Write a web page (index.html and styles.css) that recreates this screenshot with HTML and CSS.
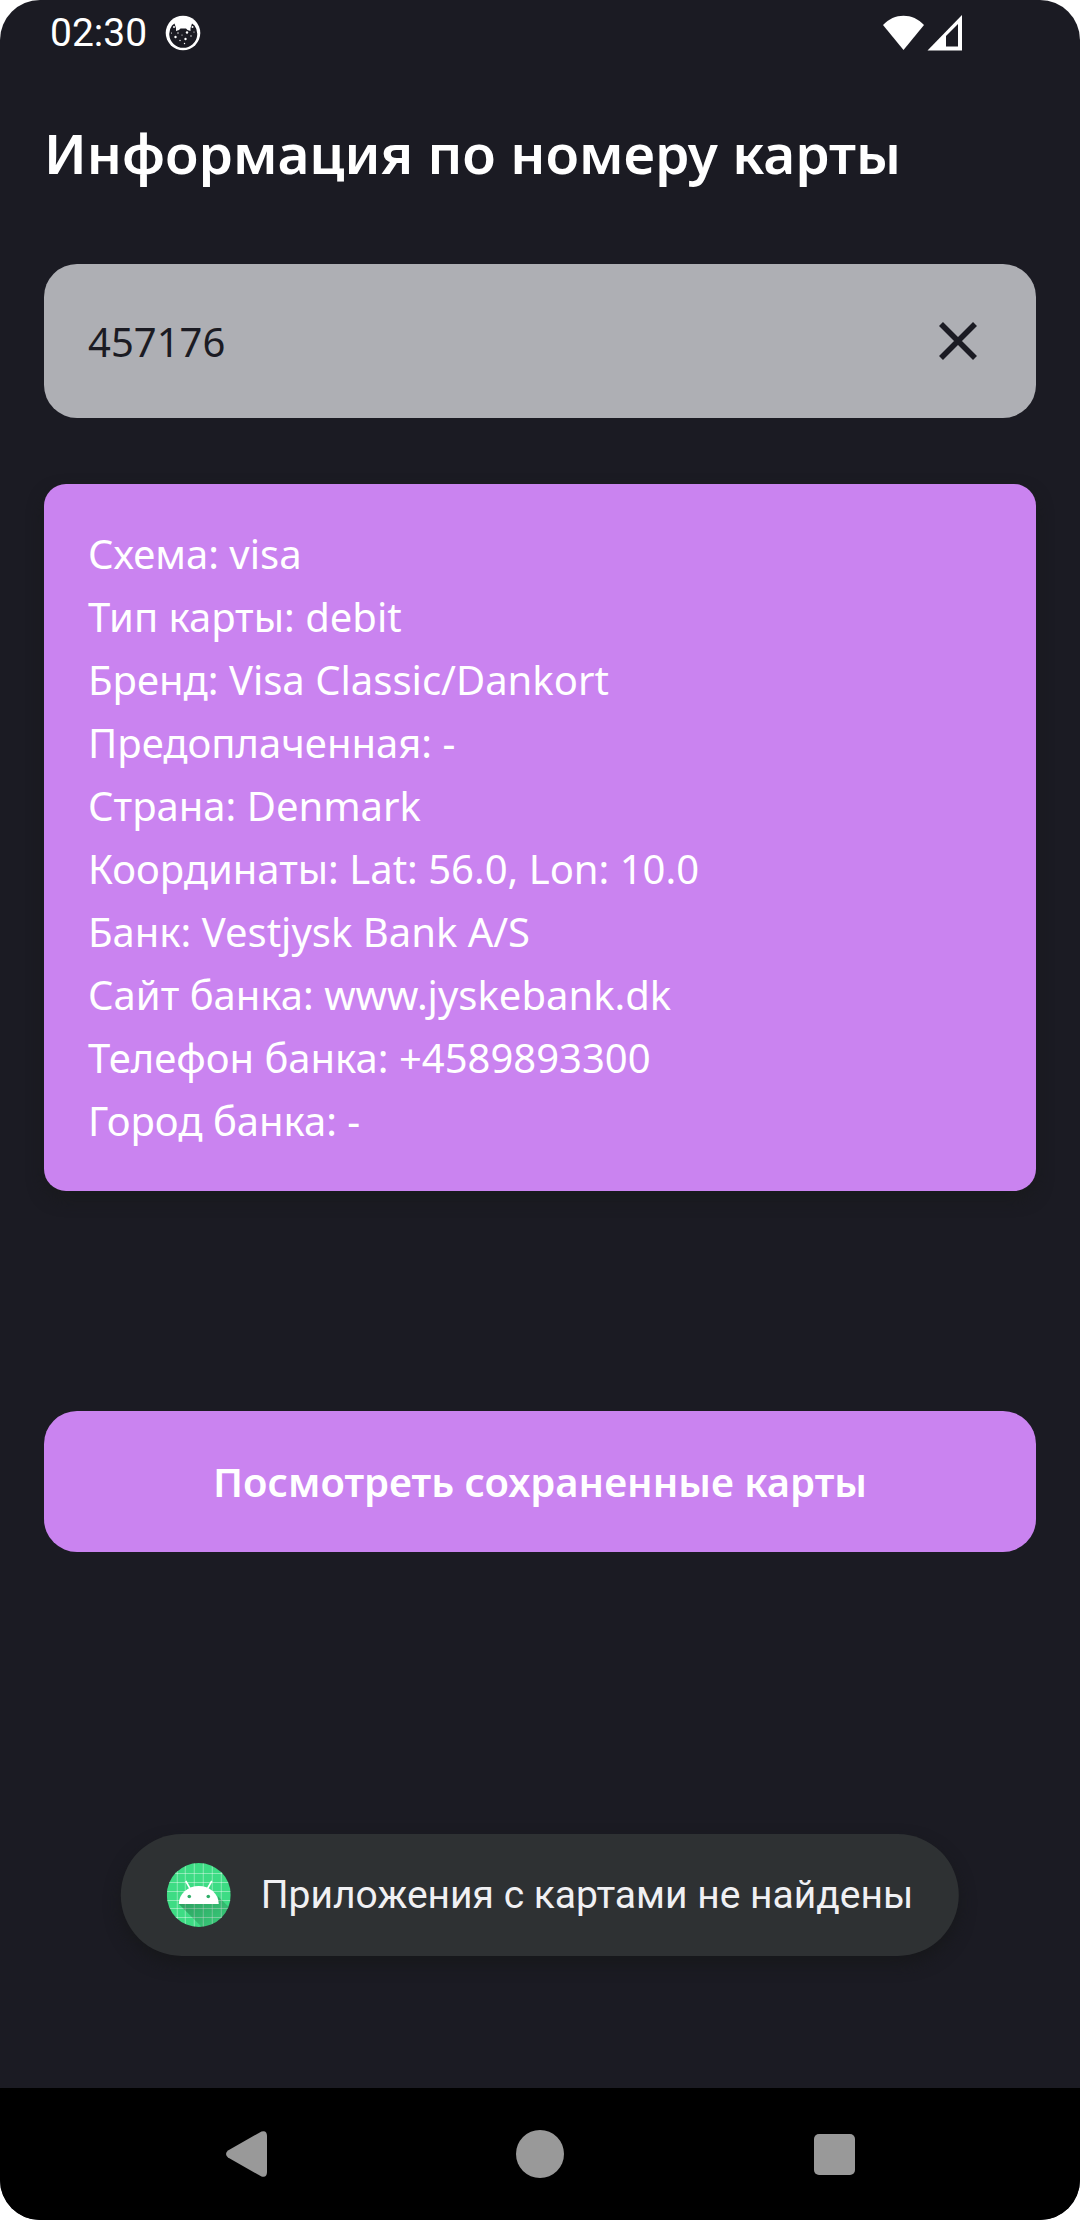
FILE: index.html
```html
<!DOCTYPE html>
<html lang="ru">
<head>
  <meta charset="utf-8">
  <meta name="viewport" content="width=device-width, initial-scale=1">
  <title>Информация по номеру карты</title>
  <link rel="stylesheet" href="styles.css">
</head>
<body>
  <div class="screen">
    <header class="status">
      <time class="status-time">02:30</time>
      <svg class="status-app" viewBox="0 0 36 36" aria-hidden="true">
        <circle cx="18" cy="18" r="17.3" fill="#fff"/>
        <path d="M7 10.500 9.500 8.500 11 13 11 16 14 15 15.500 13.500H21L22.500 15 25.500 16V13L27 8.500 29.500 10.500A14 14 0 1 1 7 10.500Z" fill="#1b1b23"/>
        <g fill="#fff">
          <circle cx="9" cy="12" r="1"/><circle cx="27.500" cy="12" r="1"/>
          <circle cx="22" cy="17.500" r="1.200"/><circle cx="10.500" cy="22" r="1.200"/><circle cx="20.500" cy="24" r="1.200"/>
          <circle cx="13" cy="18" r=".7"/><circle cx="17" cy="20" r=".6"/><circle cx="26" cy="21" r=".7"/>
          <circle cx="15" cy="25.500" r=".7"/><circle cx="19.500" cy="28.500" r=".7"/><circle cx="6.500" cy="18" r=".6"/><circle cx="29" cy="17" r=".6"/>
        </g>
      </svg>
      <svg class="status-signal" viewBox="0 0 80 36" aria-label="Wi-Fi и сотовая сеть" role="img">
        <path d="M0 10C11-2.500 30-2.500 41 10L20.500 35Z" fill="#fff"/>
        <path d="M44.500 35.500 79 0V35.500Z" fill="#fff"/>
        <path d="M63 21 75 9V31.500H63Z" fill="#1b1b23"/>
      </svg>
    </header>

    <main class="content">
      <h1 class="title">Информация по номеру карты</h1>

      <form class="search">
        <input class="search-input" type="text" inputmode="numeric" aria-label="Номер карты" value="457176">
        <button class="search-clear" type="reset" aria-label="Очистить">
          <svg viewBox="0 0 40 40" aria-hidden="true"><path d="M3 3 37 37M37 3 3 37" stroke="#1b1b23" stroke-width="5.600" fill="none"/></svg>
        </button>
      </form>

      <section class="card">
        <p>Схема: visa</p>
        <p>Тип карты: debit</p>
        <p>Бренд: Visa Classic/Dankort</p>
        <p>Предоплаченная: -</p>
        <p>Страна: Denmark</p>
        <p>Координаты: Lat: 56.0, Lon: 10.0</p>
        <p>Банк: Vestjysk Bank A/S</p>
        <p>Сайт банка: www.jyskebank.dk</p>
        <p>Телефон банка: +4589893300</p>
        <p>Город банка: -</p>
      </section>

      <button class="saved" type="button">Посмотреть сохраненные карты</button>
    </main>

    <div class="toast" role="status">
      <svg class="toast-icon" viewBox="0 0 64 64" aria-hidden="true">
        <defs>
          <clipPath id="disc"><circle cx="32" cy="32" r="32"/></clipPath>
          <linearGradient id="shade" x1="0" y1="0" x2="1" y2="1">
            <stop offset="0" stop-color="#000" stop-opacity=".3"/>
            <stop offset="1" stop-color="#000" stop-opacity=".05"/>
          </linearGradient>
        </defs>
        <g clip-path="url(#disc)">
          <path d="M0 0H64V64H0Z" fill="#3ddc84"/>
          <path d="M10.500 0V64M18.500 0V64M27.500 0V64M36.500 0V64M45.500 0V64M54.500 0V64M0 10.500H64M0 19.500H64M0 28.500H64M0 37.500H64M0 45.500H64M0 54.500H64" stroke="#fff" stroke-opacity=".4"/>
          <path d="M12 41 36 65H64V46L51 33V41Z" fill="url(#shade)"/>
        </g>
        <path d="M12 41A20 18 0 0 1 52 41Z" fill="#fff"/>
        <path d="M19 18 23.500 26M45 18 40.500 26" stroke="#fff" stroke-width="1.600"/>
        <circle cx="22.500" cy="33.500" r="1.800" fill="#2fae68"/><circle cx="41.500" cy="33.500" r="1.800" fill="#2fae68"/>
      </svg>
      <span>Приложения с картами не найдены</span>
    </div>

    <nav class="navbar" aria-label="Системная навигация">
      <button type="button" aria-label="Назад"><svg viewBox="0 0 48 48"><path d="M6 20.500 39.500 1.500Q45 0 45 6V42Q45 48 39.500 46.500L6 27.500Q2 24 6 20.500Z" fill="#999"/></svg></button>
      <button type="button" aria-label="Домой"><svg viewBox="0 0 48 48"><circle cx="24" cy="24" r="24" fill="#999"/></svg></button>
      <button type="button" aria-label="Недавние"><svg viewBox="0 0 48 48"><rect x="4" y="4" width="41" height="41" rx="5" fill="#999"/></svg></button>
    </nav>
  </div>
</body>
</html>
```
FILE: styles.css
```css
* {
  box-sizing: border-box;
}

body {
  margin: 0;
  background: #fff;
  color: #fff;
  font-family: "Noto Sans", "Open Sans", sans-serif;
  font-size: 40px;
  line-height: 63px;
}

button,
input {
  border: 0;
  padding: 0;
  background: none;
  color: inherit;
  font: inherit;
}

svg {
  display: block;
}

.screen {
  position: relative;
  display: flex;
  flex-direction: column;
  min-height: 100vh;
  overflow: hidden;
  border-radius: 40px;
  background: #1b1b23;
}

.status {
  display: flex;
  align-items: center;
  height: 66px;
  padding: 0 117px 0 50px;
  font-family: Roboto, sans-serif;
  font-size: 39px;
}

.status-app {
  width: 36px;
  height: 36px;
  margin-left: 18px;
}

.status-signal {
  width: 80px;
  height: 36px;
  margin-left: auto;
}

.content {
  display: flex;
  flex: 1;
  flex-direction: column;
  padding: 48px 44px;
}

.title {
  margin: 0 0 72px;
  font-size: 55px;
  font-weight: 600;
  line-height: 78px;
}

.search {
  display: flex;
  align-items: center;
  height: 154px;
  margin-bottom: 66px;
  padding: 0 44px;
  border-radius: 33px;
  background: #aeafb4;
  color: #1b1b23;
}

.search-input {
  flex: 1;
  min-width: 0;
  outline: 0;
}

.search-clear {
  padding: 14px;
}

.search-clear svg {
  width: 40px;
  height: 40px;
}

.card {
  margin-bottom: 220px;
  padding: 38px 44px 39px;
  border-radius: 22px;
  background: #ca83f0;
  box-shadow: 0 8px 16px #191a1d;
}

.card p {
  margin: 0;
}

.saved {
  height: 141px;
  border-radius: 33px;
  background: #ca83f0;
  font-weight: 600;
}

.toast {
  position: absolute;
  bottom: 264px;
  left: 50%;
  display: flex;
  align-items: center;
  gap: 30px;
  height: 122px;
  padding: 0 46px;
  border-radius: 61px;
  background: #2e3133;
  box-shadow: 0 8px 16px #17181b;
  color: #f0f0f3;
  font-family: Roboto, sans-serif;
  font-size: 39px;
  white-space: nowrap;
  transform: translateX(-50%);
}

.toast-icon {
  width: 64px;
  height: 64px;
}

.navbar {
  display: flex;
  justify-content: center;
  gap: 246px;
  height: 132px;
  background: #000;
}

.navbar svg {
  width: 48px;
  height: 48px;
}
```
